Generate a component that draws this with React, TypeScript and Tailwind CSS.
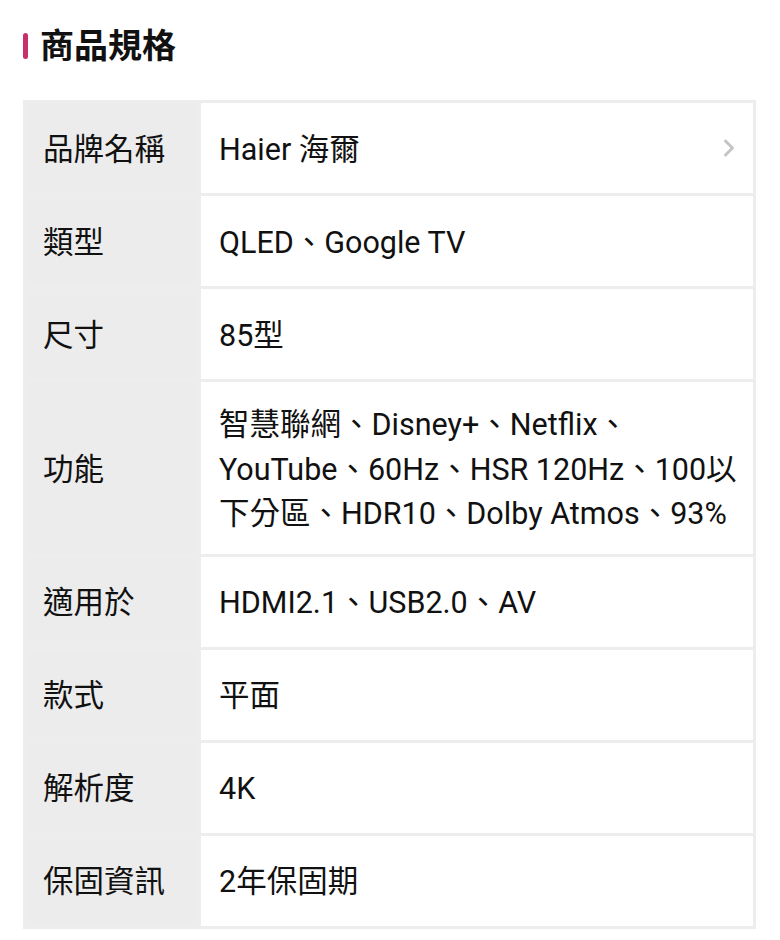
import { ChevronRight } from "lucide-react";

const specs: { label: string; value: string; link?: boolean }[] = [
  { label: "品牌名稱", value: "Haier 海爾", link: true },
  { label: "類型", value: "QLED、Google TV" },
  { label: "尺寸", value: "85型" },
  { label: "功能", value: "智慧聯網、Disney+、Netflix、YouTube、60Hz、HSR 120Hz、100以下分區、HDR10、Dolby Atmos、93%" },
  { label: "適用於", value: "HDMI2.1、USB2.0、AV" },
  { label: "款式", value: "平面" },
  { label: "解析度", value: "4K" },
  { label: "保固資訊", value: "2年保固期" },
];

export default function App() {
  return (
    <div
      className="w-[780px] h-[940px] bg-white text-[#111] overflow-hidden"
      style={{ fontFamily: 'Roboto, "Noto Sans CJK TC", sans-serif' }}
    >
      {/* Title */}
      <div className="flex items-start gap-[12px] pl-[23px] pt-[25px] h-[100px]">
        <span className="w-[5px] h-[26px] rounded-full bg-[#c8306d] mt-[8px]" />
        <h2 className="text-[34px] font-bold leading-[42px]">商品規格</h2>
      </div>

      {/* Table */}
      <div className="mx-[23px] w-[733px] grid grid-cols-[172px_1fr] gap-[3px] bg-[#ededed] p-[3px]">
        {specs.map((s) => (
          <div key={s.label} className="contents">
            <div className="bg-[#ececec] flex items-center pl-[17px] pt-[4px] min-h-[90px] text-[30.5px] leading-[44.5px]">
              {s.label}
            </div>
            <div className="bg-white flex items-center justify-between pl-[18px] pr-[10px] min-h-[90px] pt-[21px] pb-[17px] text-[30.5px] leading-[44.5px]">
              <span>{s.value}</span>
              {s.link && <ChevronRight className="shrink-0 text-[#c4c4c4] -mt-[4px]" size={28} strokeWidth={2.5} />}
            </div>
          </div>
        ))}
      </div>
    </div>
  );
}
